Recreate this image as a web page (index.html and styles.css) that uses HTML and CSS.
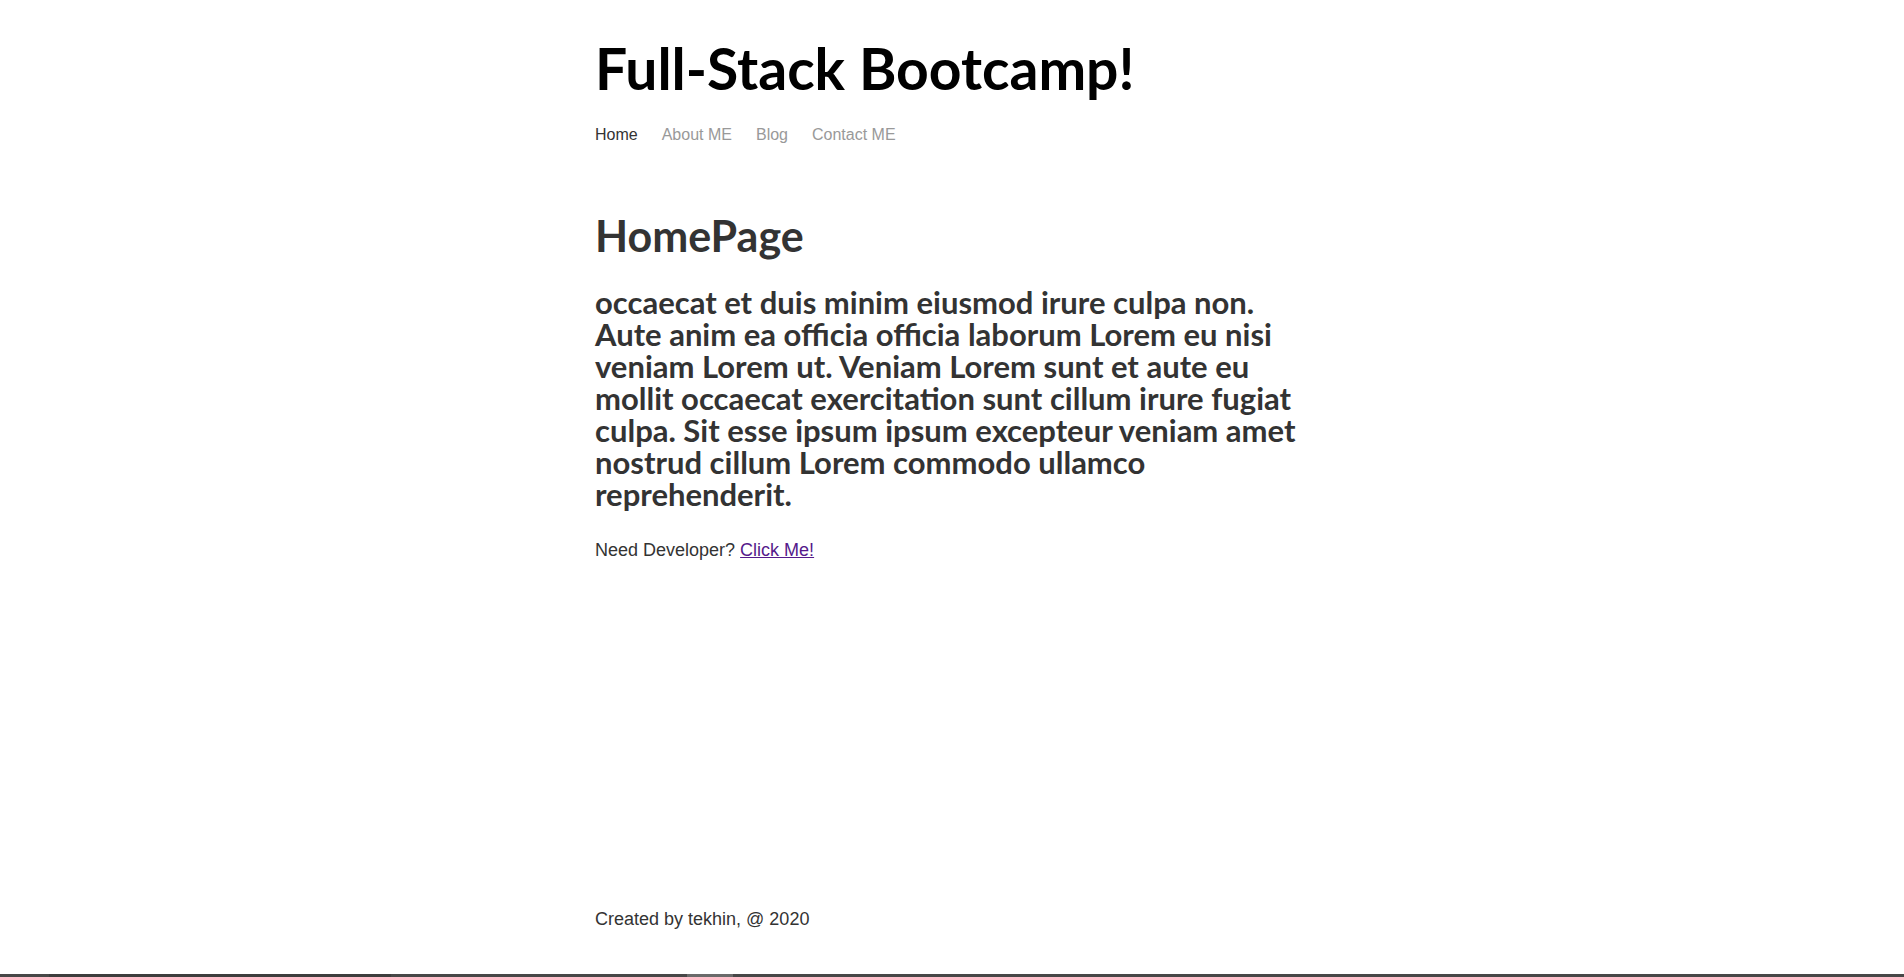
FILE: index.html
```html
<!DOCTYPE html>
<html lang="en">
<head>
<meta charset="utf-8">
<title>Full-Stack Bootcamp!</title>
<link rel="stylesheet" href="styles.css">
</head>
<body>
<div class="page">
  <div class="container">
    <header class="header">
      <h1 class="site-title">Full-Stack Bootcamp!</h1>
      <nav class="nav">
        <a class="nav-link active" href="#">Home</a>
        <a class="nav-link" href="#">About ME</a>
        <a class="nav-link" href="#">Blog</a>
        <a class="nav-link" href="#">Contact ME</a>
      </nav>
    </header>
    <main class="main">
      <h2 class="page-title">HomePage</h2>
      <h3 class="lead">occaecat et duis minim eiusmod irure culpa non. Aute anim ea officia officia laborum Lorem eu nisi veniam Lorem ut. Veniam Lorem sunt et aute eu mollit occaecat exercitation sunt cillum irure fugiat culpa. Sit esse ipsum ipsum excepteur veniam amet nostrud cillum Lorem commodo ullamco reprehenderit.</h3>
      <p class="cta">Need Developer? <a class="cta-link" href="#">Click Me!</a></p>
    </main>
    <footer class="footer">Created by tekhin, @ 2020</footer>
  </div>
</div>
<div class="bottom-bar">
  <span class="seg seg-a"></span>
  <span class="seg seg-b"></span>
  <span class="seg seg-c"></span>
  <span class="seg seg-d"></span>
  <span class="seg seg-e"></span>
</div>
</body>
</html>
```

FILE: styles.css
```css
html, body {
  margin: 0;
  padding: 0;
  height: 100%;
  background: #ffffff;
}

body {
  display: flex;
  flex-direction: column;
  font-family: "Liberation Sans", Arial, sans-serif;
  font-size: 18px;
  color: #333333;
  overflow: hidden;
}

.page {
  flex: 1;
  display: flex;
}

.container {
  width: 714px;
  margin: 0 auto;
  display: flex;
  flex-direction: column;
}

.site-title {
  margin: 34px 0 0;
  font-family: Lato, "Open Sans", sans-serif;
  font-weight: 700;
  font-size: 57px;
  line-height: 1.2;
  color: #000000;
}

.nav {
  display: flex;
  gap: 24px;
  margin-top: 24px;
  font-size: 16px;
  line-height: normal;
}

.nav-link {
  color: #999999;
  text-decoration: none;
}

.nav-link.active {
  color: #333333;
}

.page-title {
  margin: 66px 0 0;
  font-family: Lato, "Open Sans", sans-serif;
  font-weight: 700;
  font-size: 43px;
  line-height: 1.2;
  color: #333333;
}

.lead {
  margin: 24px -8px 0 0;
  font-family: Lato, "Open Sans", sans-serif;
  font-weight: 700;
  font-size: 31px;
  line-height: 32px;
  color: #333333;
}

.cta {
  margin: 30px 0 0;
  line-height: normal;
}

.cta-link {
  color: #551a8b;
}

.footer {
  margin-top: auto;
  padding-bottom: 44px;
  line-height: normal;
}

.bottom-bar {
  height: 3px;
  display: flex;
  background: #474747;
  flex-shrink: 0;
}

.seg {
  display: block;
  height: 100%;
}

.seg-a { width: 49px; background: #474747; }
.seg-b { width: 342px; background: #3d3d3d; }
.seg-c { width: 296px; background: #474747; }
.seg-d { width: 46px; background: #6a6a6a; }
.seg-e { flex: 1; background: #474747; }
```
